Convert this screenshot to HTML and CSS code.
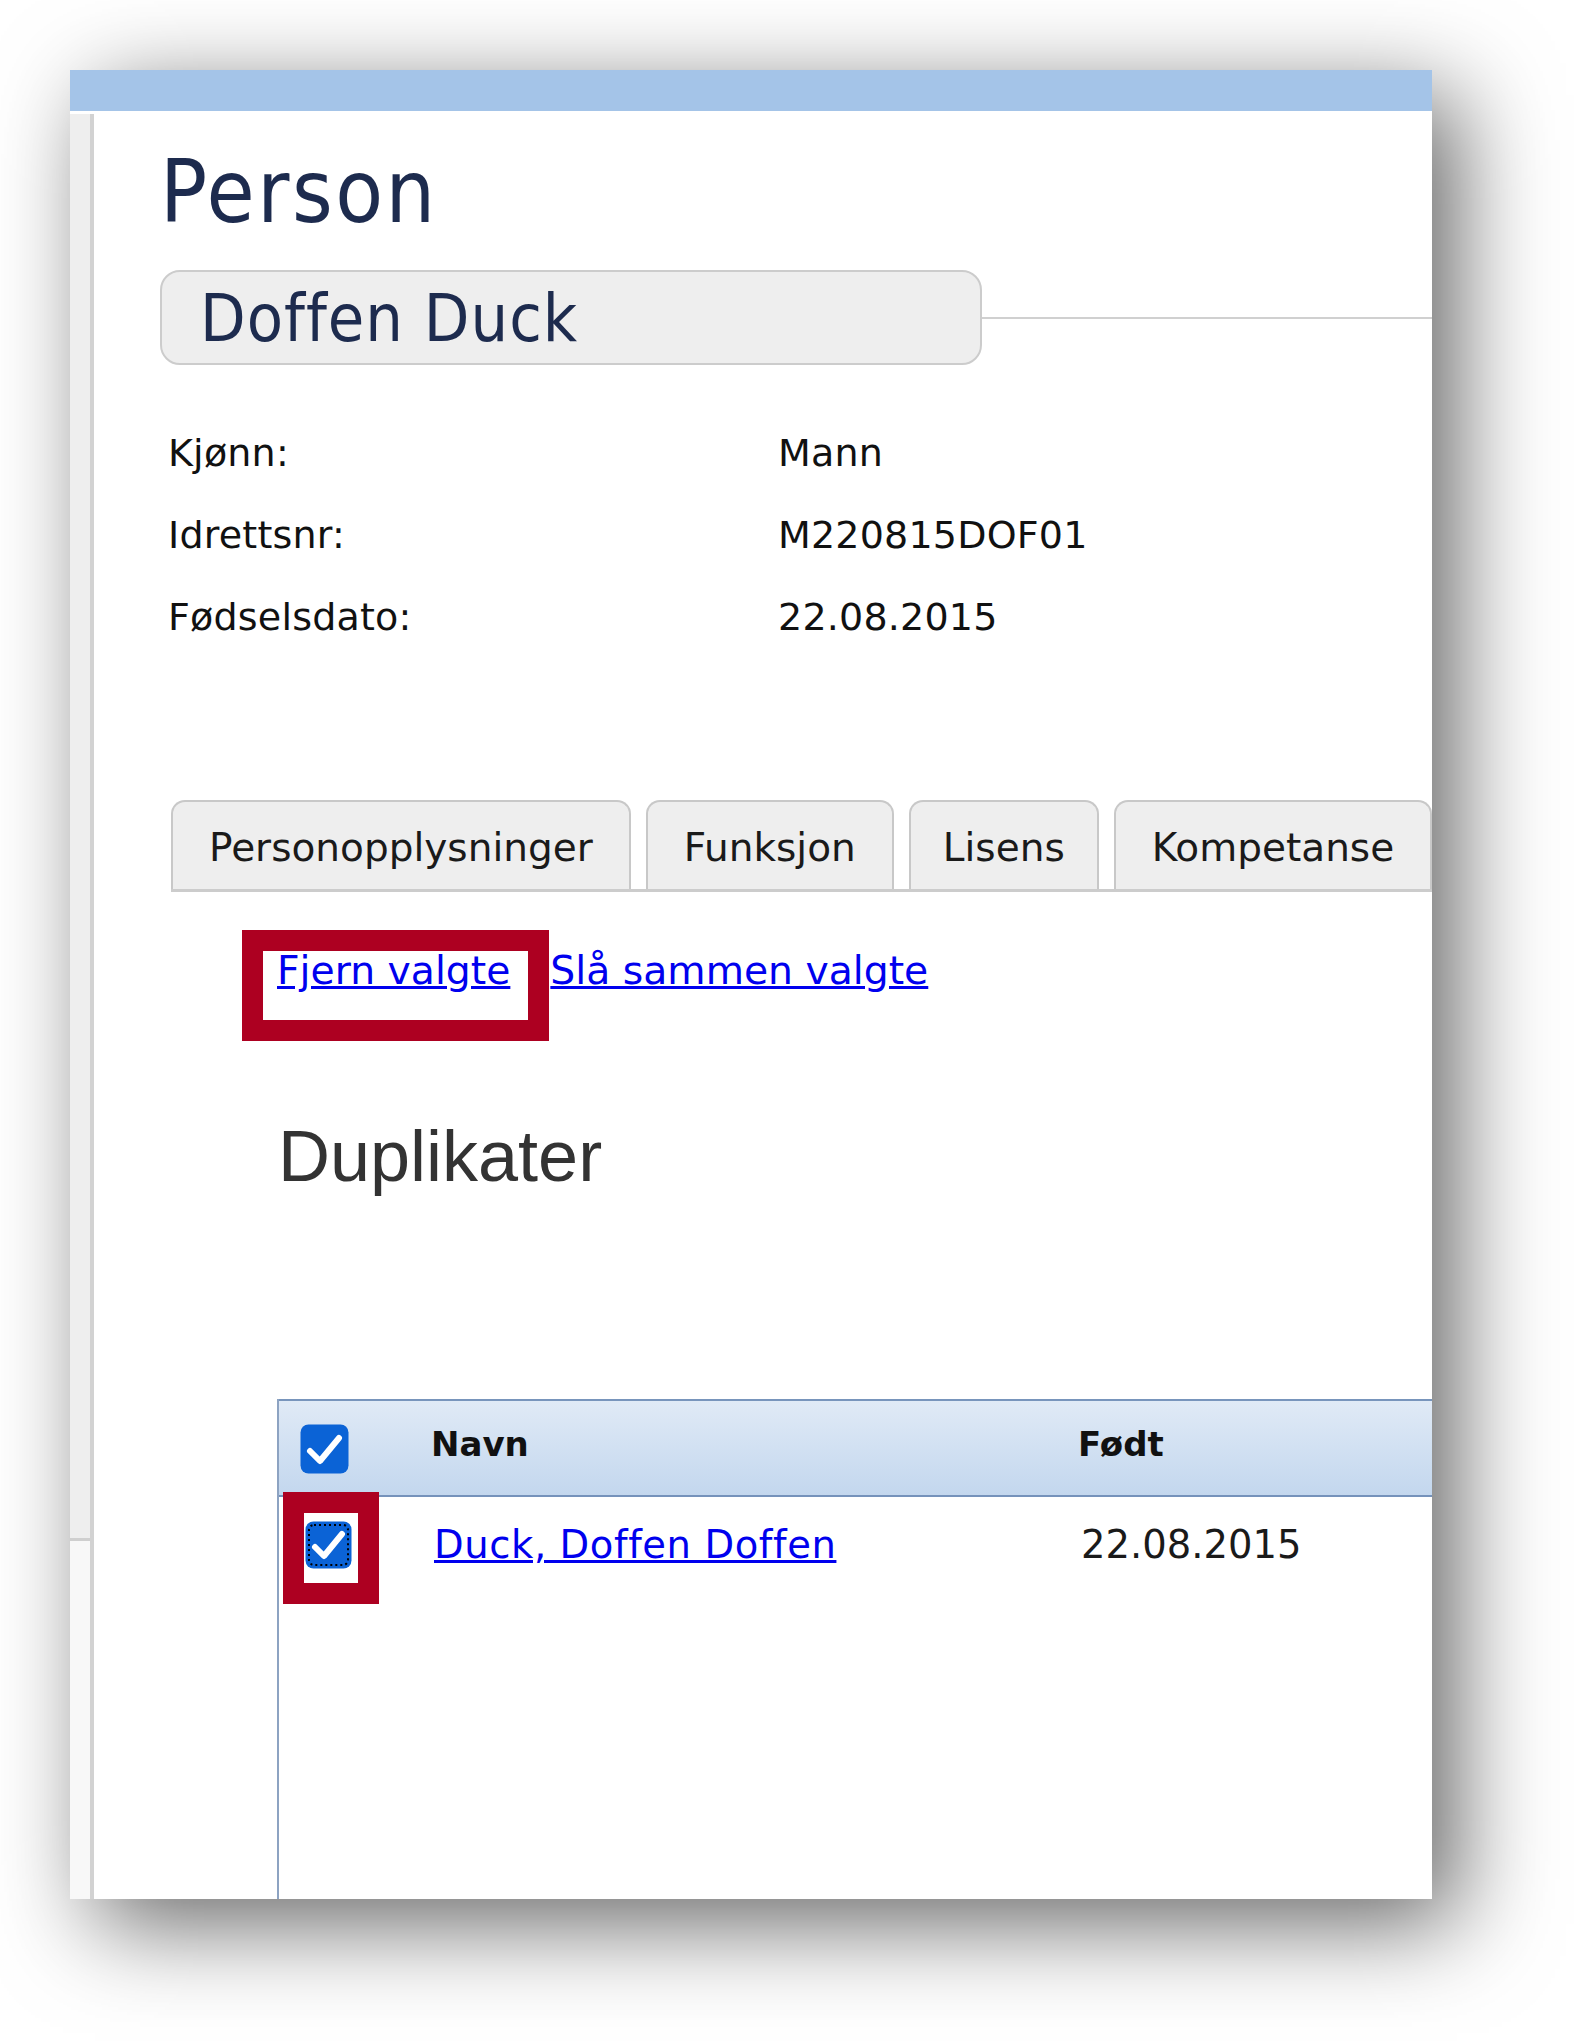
FILE: index.html
```html
<!DOCTYPE html>
<html>
<head>
  <link rel="stylesheet" href="styles.css">
</head>
<body>

<div class="window">
  <div class="topbar"></div>

  <div class="layout">
    <div class="sidebar">
      <div class="sidebar-top"></div>
      <div class="sidebar-bottom"></div>
    </div>

    <div class="main">
      <h1 class="page-title">Person</h1>

      <div class="name-row">
        <div class="name-box">Doffen Duck</div>
        <div class="name-line"></div>
      </div>

      <div class="info">
        <div class="info-row">
          <span class="info-label">Kjønn:</span>
          <span class="info-value">Mann</span>
        </div>
        <div class="info-row">
          <span class="info-label">Idrettsnr:</span>
          <span class="info-value">M220815DOF01</span>
        </div>
        <div class="info-row">
          <span class="info-label">Fødselsdato:</span>
          <span class="info-value">22.08.2015</span>
        </div>
      </div>

      <div class="tabs">
        <div class="tab">Personopplysninger</div>
        <div class="tab">Funksjon</div>
        <div class="tab tab-short">Lisens</div>
        <div class="tab">Kompetanse</div>
      </div>

      <div class="actions">
        <span class="marked marked-link"><a href="#">Fjern valgte</a></span>
        <a href="#" class="merge-link">Slå sammen valgte</a>
      </div>

      <h2 class="section-title">Duplikater</h2>

      <div class="grid">
        <div class="grid-head">
          <div class="cell cell-check">
            <svg width="49" height="50" viewBox="0 0 49 50">
              <rect x="0.5" y="0.5" width="48" height="49" rx="8" fill="#0b63d6"/>
              <path d="M10 27 L20 37 L39 14" fill="none" stroke="#fff" stroke-width="6" stroke-linecap="round" stroke-linejoin="round"/>
            </svg>
          </div>
          <div class="cell">Navn</div>
          <div class="cell">Født</div>
        </div>

        <div class="grid-row">
          <div class="cell cell-check">
            <span class="marked marked-check">
              <svg width="47" height="48" viewBox="0 0 47 48">
                <rect x="0.5" y="0.5" width="46" height="47" rx="8" fill="#0b63d6"/>
                <rect x="4" y="4" width="39" height="40" rx="5" fill="none" stroke="#000" stroke-width="2" stroke-dasharray="2 3"/>
                <path d="M10 26 L19 35 L37 13" fill="none" stroke="#fff" stroke-width="6" stroke-linecap="round" stroke-linejoin="round"/>
              </svg>
            </span>
          </div>
          <div class="cell cell-name"><a href="#">Duck, Doffen Doffen</a></div>
          <div class="cell cell-date">22.08.2015</div>
        </div>
      </div>
    </div>
  </div>
</div>

</body>
</html>
```

FILE: styles.css
```css
body {
  margin: 0;
  min-height: 2041px;
  background-color: #fff;
  font-family: "DejaVu Sans", Verdana, sans-serif;
  color: #1a1a1a;
}

.window {
  margin: 70px 0 0 70px;
  width: 1362px;
  height: 1829px;
  background-color: #fff;
  box-shadow: 25px 25px 90px rgba(0, 0, 0, 0.6);
  overflow: hidden;
  display: flex;
  flex-direction: column;
}

.topbar {
  height: 41px;
  background-color: #a4c4e8;
  flex-shrink: 0;
}

.layout {
  flex: 1;
  display: flex;
  margin-top: 3px;
}

.sidebar {
  width: 20px;
  border-right: 4px solid #d2d2d2;
  display: flex;
  flex-direction: column;
}

.sidebar-top {
  height: 1424px;
  background-color: #eeeeee;
  border-bottom: 3px solid #cfcfcf;
}

.sidebar-bottom {
  flex: 1;
  background-color: #f8f8f8;
}

.main {
  flex: 1;
  min-width: 0;
  padding-left: 66px;
  display: flex;
  flex-direction: column;
}

.page-title {
  margin: 28px 0 0 0;
  font-family: "DejaVu Sans Condensed", "DejaVu Sans", sans-serif;
  font-stretch: condensed;
  font-weight: normal;
  font-size: 87px;
  line-height: 100px;
  letter-spacing: 2.5px;
  color: #1d2b4e;
}

.name-row {
  margin-top: 28px;
  display: flex;
  align-items: center;
}

.name-box {
  box-sizing: border-box;
  width: 822px;
  height: 95px;
  padding: 2px 0 0 38px;
  background-color: #eeeeee;
  border: 2px solid #cccccc;
  border-radius: 20px;
  font-family: "DejaVu Sans Condensed", "DejaVu Sans", sans-serif;
  font-stretch: condensed;
  font-size: 66px;
  line-height: 89px;
  letter-spacing: 1px;
  color: #1d2b4e;
}

.name-line {
  flex: 1;
  height: 2px;
  background-color: #d0d0d0;
}

.info {
  margin: 47px 0 0 8px;
  font-size: 38px;
  letter-spacing: 0.2px;
  color: #111;
}

.info-row {
  display: flex;
  height: 82px;
  line-height: 82px;
}

.info-label {
  width: 610px;
}

.tabs {
  margin: 142px 0 0 11px;
  display: flex;
  border-bottom: 3px solid #cccccc;
}

.tab {
  height: 83px;
  padding: 4px 36px 0;
  margin-right: 15px;
  background-color: #eeeeee;
  border: 2px solid #c8c8c8;
  border-bottom: none;
  border-radius: 14px 14px 0 0;
  font-size: 39px;
  line-height: 83px;
  white-space: nowrap;
  color: #1a1a1a;
}

.tab-short {
  padding: 4px 32px 0;
}

.actions {
  margin: 57px 0 0 117px;
  display: flex;
  font-size: 39.3px;
  line-height: 44px;
}

a {
  color: #0000ee;
  text-decoration: underline;
}

.merge-link {
  margin-left: 40px;
}

.marked {
  position: relative;
  display: inline-block;
}

.marked::after {
  content: "";
  position: absolute;
  border: 21px solid #ad0021;
  box-sizing: border-box;
}

.marked-link::after {
  left: -35px;
  top: -19px;
  width: 307px;
  height: 111px;
}

.marked-check::after {
  left: -22px;
  top: -29px;
  width: 96px;
  height: 112px;
}

.section-title {
  margin: 123px 0 0 118px;
  font-family: "Liberation Sans", Arial, sans-serif;
  font-weight: normal;
  font-size: 72px;
  line-height: 80px;
  color: #333333;
}

.grid {
  flex: 1;
  margin: 203px 0 0 117px;
  border-left: 2px solid #8da3c2;
}

.grid-head,
.grid-row {
  display: grid;
  grid-template-columns: 151px 647px 1fr;
}

.grid-head {
  height: 94px;
  border-top: 2px solid #7895bc;
  border-bottom: 2px solid #7592bb;
  background: linear-gradient(#e0eaf6, #c3d7ee);
  font-weight: bold;
  font-size: 34px;
  line-height: 40px;
  color: #111;
}

.grid-head .cell {
  padding: 23px 0 0 1px;
}

.grid-head .cell-check {
  padding-left: 21px;
}

.grid-row {
  font-size: 38.5px;
  line-height: 44px;
}

.grid-row .cell {
  padding-top: 26px;
}

.grid-row .cell-name,
.grid-row .cell-date {
  padding-left: 4px;
}

.grid-row .cell-name a {
  letter-spacing: 0.6px;
}

.grid-row .cell-check {
  padding: 24px 0 0 26px;
}

.cell svg {
  display: block;
}
```
